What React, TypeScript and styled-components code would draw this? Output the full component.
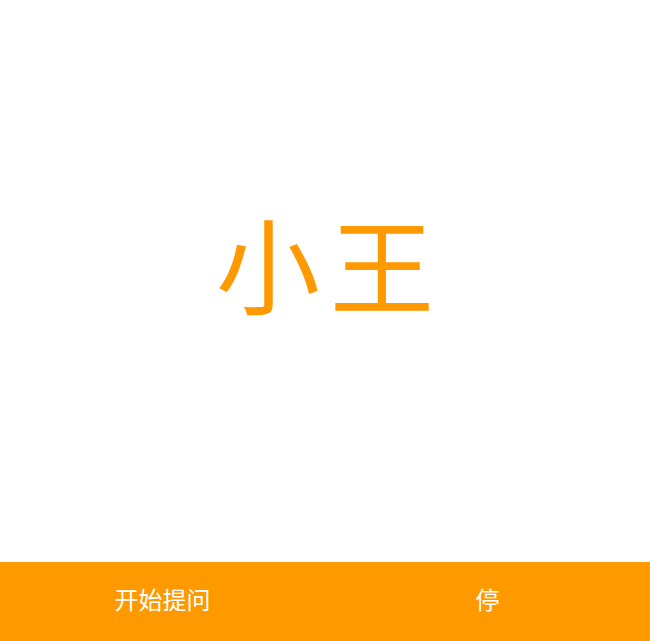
import * as React from 'react';
import styled, { createGlobalStyle } from 'styled-components';

const GlobalStyle = createGlobalStyle`
  html, body {
    margin: 0;
    padding: 0;
    height: 100%;
    background: #fff;
  }
  #root {
    height: 100%;
  }
`;

const Page = styled.div`
  height: 100vh;
  display: flex;
  flex-direction: column;
  font-family: "Noto Sans CJK SC", "Noto Sans", sans-serif;
`;

const Stage = styled.main`
  flex: 1;
  display: flex;
  align-items: center;
  justify-content: center;
`;

const Name = styled.h1`
  margin: 0 -10px 38px 0;
  font-size: 104px;
  font-weight: 400;
  line-height: 1;
  letter-spacing: 10px;
  color: #ff9900;
`;

const Toolbar = styled.footer`
  height: 79px;
  display: grid;
  grid-template-columns: 1fr 1fr;
  background: #ff9900;
`;

const ToolButton = styled.button`
  border: none;
  padding: 0 0 6px;
  background: transparent;
  color: #fff;
  font-family: inherit;
  font-size: 24px;
  cursor: pointer;
`;

export default function App() {
  return (
    <Page>
      <GlobalStyle />
      <Stage>
        <Name>小王</Name>
      </Stage>
      <Toolbar>
        <ToolButton>开始提问</ToolButton>
        <ToolButton>停</ToolButton>
      </Toolbar>
    </Page>
  );
}
